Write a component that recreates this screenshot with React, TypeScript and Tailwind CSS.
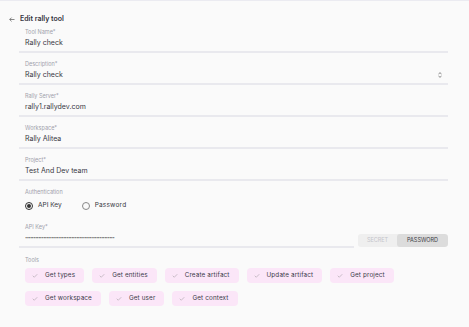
import { Check } from 'lucide-react';

const font = { fontFamily: 'Inter, "Liberation Sans", sans-serif' };

function Field({ label, value, select }: { label: string; value: string; select?: boolean }) {
  return (
    <div className="border-b-2 border-[#e9e9ee] pt-[2px] pb-[4px] pl-[6px] pr-[5px]">
      <div className="h-[7px] text-[5.5px] leading-[7px] text-[#a0a0aa]">{label}</div>
      <div className="mt-[2px] flex h-[9px] items-center justify-between">
        <span className="text-[7px] leading-[9px] text-[#383842]">{value}</span>
        {select && (
          <svg width="4" height="6" viewBox="0 0 4 6" className="mr-[1px]">
            <path d="M0.5 2 L2 0.7 L3.5 2 M0.5 4 L2 5.3 L3.5 4" fill="none" stroke="#666" strokeWidth="0.8" />
          </svg>
        )}
      </div>
    </div>
  );
}

const tools = [
  ['Get types', 'Get entities', 'Create artifact', 'Update artifact', 'Get project'],
  ['Get workspace', 'Get user', 'Get context'],
];

export default function App() {
  return (
    <div className="h-[327px] w-[469px] overflow-hidden border-t border-[#ebebf1] bg-[#fafafa]" style={font}>
      {/* Header */}
      <div className="mt-[13px] flex h-[10px] items-center gap-[5px] pl-[9px]">
        <svg width="6" height="5" viewBox="0 0 6 5">
          <path d="M5.5 2.5 H0.8 M2.6 0.6 L0.7 2.5 L2.6 4.4" fill="none" stroke="#555" strokeWidth="0.7" />
        </svg>
        <span className="text-[7px] font-semibold leading-[10px] text-[#33333d]">Edit rally tool</span>
      </div>

      <div className="ml-[19px] mt-[3px] w-[429px]">
        <div className="flex flex-col gap-[6px]">
          <Field label="Tool Name*" value="Rally check" />
          <Field label="Description*" value="Rally check" select />
          <Field label="Rally Server*" value="rally1.rallydev.com" />
          <Field label="Workspace*" value="Rally Alitea" />
          <Field label="Project*" value="Test And Dev team" />
        </div>

        {/* Authentication */}
        <div className="mt-[8px] pl-[6px]">
          <div className="h-[7px] text-[5.5px] leading-[7px] text-[#a0a0aa]">Authentication</div>
          <div className="mt-[5px] flex h-[10px] items-center">
            <span className="flex h-[8px] w-[8px] items-center justify-center rounded-full border border-[#333]">
              <span className="h-[4px] w-[4px] rounded-full bg-[#333]" />
            </span>
            <span className="ml-[5px] text-[6.5px] text-[#383842]">API Key</span>
            <span className="ml-[20px] h-[8px] w-[8px] rounded-full border border-[#888]" />
            <span className="ml-[5px] text-[6.5px] tracking-[0.2px] text-[#383842]">Password</span>
          </div>
        </div>

        {/* API key */}
        <div className="mt-[11px] flex items-end gap-[4px]">
          <div className="w-[335px] border-b-2 border-[#e9e9ee] pt-[2px] pb-[4px] pl-[6px]">
            <div className="h-[7px] text-[5.5px] leading-[7px] text-[#a0a0aa]">API Key*</div>
            <div className="mt-[2px] flex h-[9px] items-center overflow-hidden whitespace-nowrap text-[4px] tracking-[-0.6px] text-[#666]">
              ••••••••••••••••••••••••••••••••••••••••••••••••••••••
            </div>
          </div>
          <div className="mb-[1px] flex h-[13px] w-[90px] overflow-hidden rounded-[3px] bg-[#efefef] text-[5.5px] uppercase leading-[13px]">
            <span className="w-[39px] text-center text-[#c4c4ca]">Secret</span>
            <span className="flex-1 rounded-[3px] bg-[#dcdcdc] text-center text-[#3a3a44]">Password</span>
          </div>
        </div>

        {/* Tools */}
        <div className="mt-[9px] pl-[6px]">
          <div className="h-[7px] text-[5.5px] leading-[7px] text-[#a0a0aa]">Tools</div>
          <div className="mt-[4px] flex flex-col gap-[8px]">
            {tools.map((row, i) => (
              <div key={i} className="flex gap-[8px]">
                {row.map((t) => (
                  <span
                    key={t}
                    className="flex h-[15px] items-center gap-[7px] rounded-[4px] bg-[#fbe6f8] pl-[7px] pr-[9px] text-[6.3px] tracking-[0.15px] text-[#3a3a48]"
                  >
                    <Check size={6} strokeWidth={1.5} className="text-[#777]" />
                    {t}
                  </span>
                ))}
              </div>
            ))}
          </div>
        </div>
      </div>
    </div>
  );
}
